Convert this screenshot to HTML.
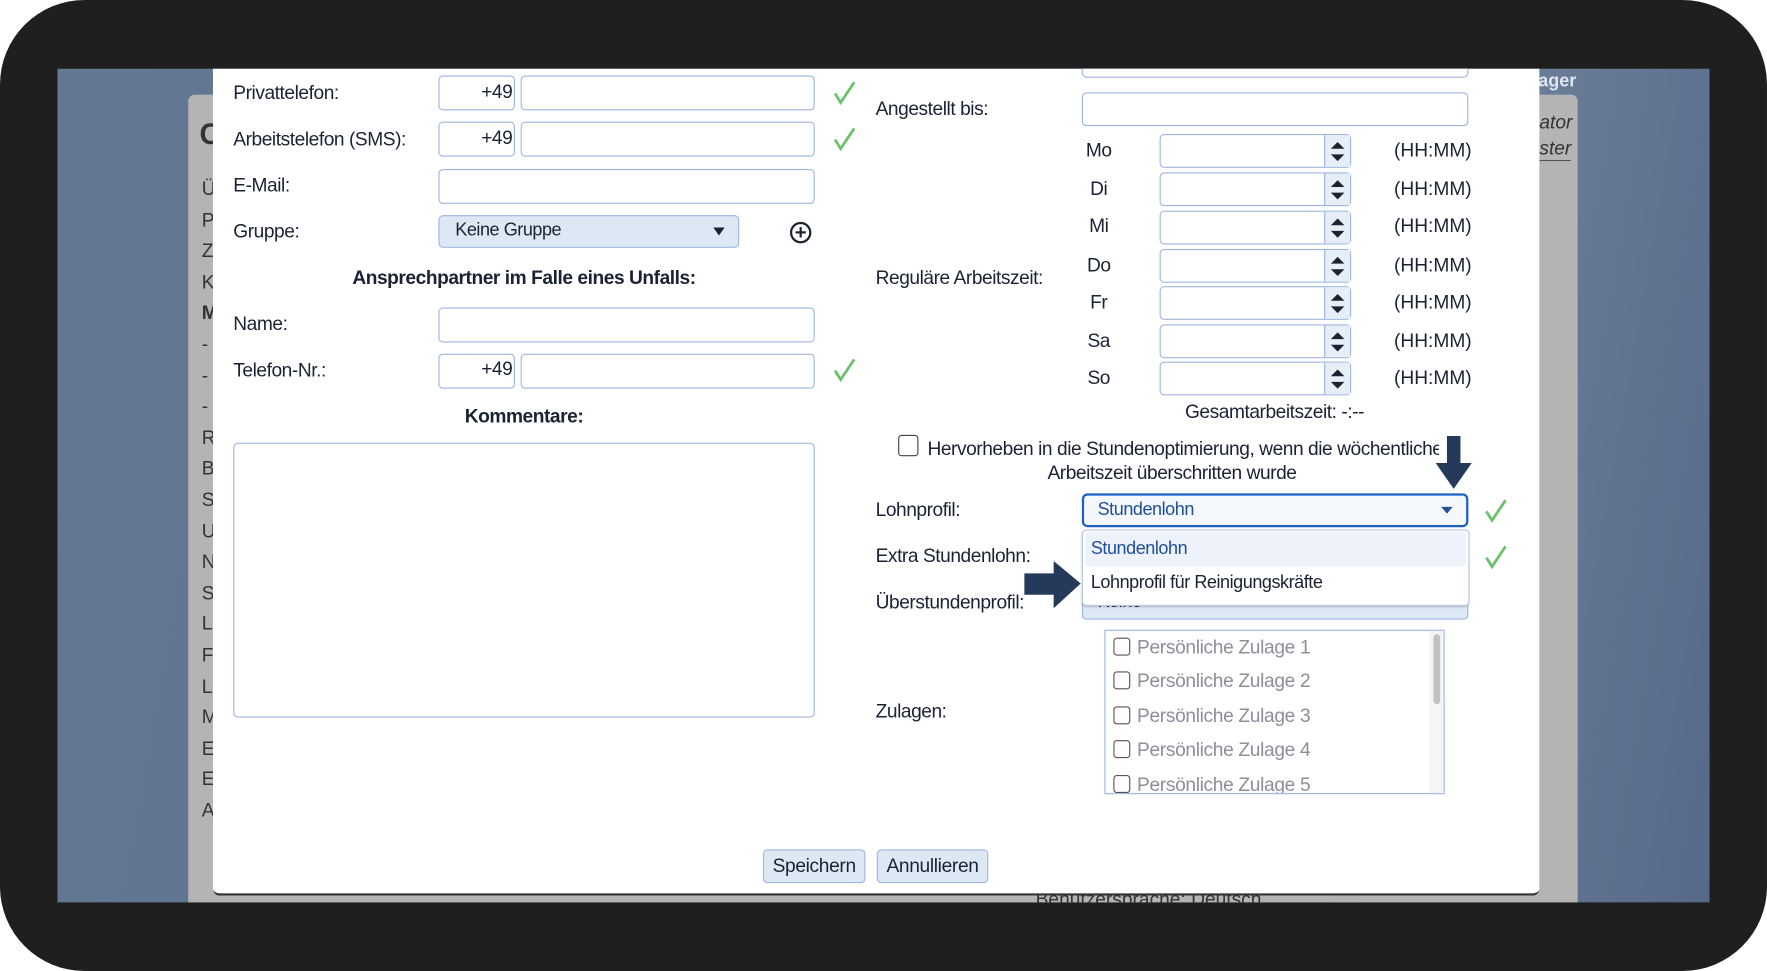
<!DOCTYPE html>
<html><head><meta charset="utf-8"><style>
*{margin:0;padding:0;box-sizing:border-box}
html,body{width:1767px;height:971px;overflow:hidden;background:#fff}
#s{position:absolute;left:0;top:0;width:1568px;height:862px;transform:scale(1.12691,1.1265);transform-origin:0 0;font-family:"Liberation Sans",sans-serif;color:#1a2233}
.a{position:absolute}
.t{position:absolute;font-size:17px;line-height:20px;white-space:nowrap;letter-spacing:-0.4px}
.in{position:absolute;border:1px solid #9db6e0;border-radius:4px;background:#fff}
.b{font-weight:bold}
.ck{position:absolute;width:22px;height:24px}
.sp{position:absolute;border:1px solid #9db6e0;border-radius:4px;background:#fff;width:170px;height:30px}
.sp::after{content:"";position:absolute;right:0;top:0;width:22px;height:28px;border-left:1px solid #9db6e0;background:#e6eef8}
.sp i{position:absolute;right:5px;width:0;height:0;border-left:6px solid transparent;border-right:6px solid transparent;z-index:2}
.hh{position:absolute;left:1237px;font-size:17px;line-height:20px}
.zl{position:absolute;left:988px;font-size:17px;line-height:20px;color:#8a8f98;letter-spacing:-0.3px}
.zl span{display:inline-block;width:15px;height:16px;border:1.5px solid #555;border-radius:3px;vertical-align:-2px;margin-right:6px}
.btn{position:absolute;height:30px;border:1px solid #9db6e0;border-radius:4px;background:#dde8f5;font-size:17px;line-height:28px;text-align:center;letter-spacing:-0.3px}
</style></head><body><div id="s">
<div class="a" style="left:0;top:0;width:1568px;height:862px;background:#201f20;border-radius:75px"></div>
<div class="a" style="left:51px;top:61px;width:1466px;height:740px;background:linear-gradient(100deg,#627893 0%,#5d7290 50%,#6c809a 80%,#56698a 100%);overflow:hidden">
 <div class="a" style="left:116px;top:23px;width:1233px;height:720px;background:#b4b4b4;border-radius:6px 6px 0 0"></div>
 <div class="a" style="left:126px;top:43px;font-size:26px;font-weight:bold;color:#333">C</div>
 <div class="a" style="left:128px;top:93px;font-size:17px;line-height:27.6px;color:#333;width:20px">Ü<br>P<br>Z<br>K<br><b>M</b><br>-<br>-<br>-<br>R<br>B<br>S<br>U<br>N<br>S<br>L<br>F<br>L<br>M<br>E<br>E<br>A</div>
 <div class="a" style="left:1314px;top:3px;font-size:16px;font-weight:bold;color:#dfe5ee">ager</div>
 <div class="a" style="left:1315px;top:38px;font-size:17px;font-style:italic;color:#333">ator</div>
 <div class="a" style="left:1315px;top:61px;font-size:17px;font-style:italic;color:#333;border-bottom:1px solid #555">ster</div>
 <div class="a" style="left:868px;top:728px;font-size:17px;color:#333">Benutzersprache: Deutsch</div>
</div>
<div class="a" style="left:189px;top:61px;width:1177px;height:734px;background:#fff;border-bottom:2px solid #333;border-radius:0 0 6px 6px;overflow:hidden">
</div>
<div class="t" style="left:207px;top:73px">Privattelefon:</div>
<div class="in" style="left:389px;top:67px;width:68px;height:31px"></div><div class="t" style="left:427px;top:72px">+49</div>
<div class="in" style="left:462px;top:67px;width:261px;height:31px"></div>
<div class="t" style="left:207px;top:114px">Arbeitstelefon (SMS):</div>
<div class="in" style="left:389px;top:108px;width:68px;height:31px"></div><div class="t" style="left:427px;top:113px">+49</div>
<div class="in" style="left:462px;top:108px;width:261px;height:31px"></div>
<div class="t" style="left:207px;top:155px">E-Mail:</div>
<div class="in" style="left:389px;top:150px;width:334px;height:31px"></div>
<div class="t" style="left:207px;top:196px">Gruppe:</div>
<div class="in" style="left:389px;top:191px;width:267px;height:29px;background:#dde8f5"></div>
<div class="t" style="left:404px;top:195px;font-size:16px">Keine Gruppe</div>
<div class="a" style="left:633px;top:202px;border-left:5px solid transparent;border-right:5px solid transparent;border-top:7px solid #1a2233"></div>
<div class="a" style="left:701px;top:197px;width:19px;height:19px;border:2px solid #1a2233;border-radius:50%;font-size:18px;line-height:14px;text-align:center;font-weight:bold">+</div>
<div class="t b" style="left:207px;width:516px;text-align:center;top:237px">Ansprechpartner im Falle eines Unfalls:</div>
<div class="t" style="left:207px;top:278px">Name:</div>
<div class="in" style="left:389px;top:273px;width:334px;height:31px"></div>
<div class="t" style="left:207px;top:319px">Telefon-Nr.:</div>
<div class="in" style="left:389px;top:314px;width:68px;height:31px"></div><div class="t" style="left:427px;top:318px">+49</div>
<div class="in" style="left:462px;top:314px;width:261px;height:31px"></div>
<div class="t b" style="left:207px;width:516px;text-align:center;top:360px">Kommentare:</div>
<div class="in" style="left:207px;top:393px;width:516px;height:244px"></div>
<svg class="ck" style="left:738px;top:70px" viewBox="0 0 22 24"><path d="M3 13 L8 21 L20 3" fill="none" stroke="#6cc26c" stroke-width="2.5"/></svg>
<svg class="ck" style="left:738px;top:111px" viewBox="0 0 22 24"><path d="M3 13 L8 21 L20 3" fill="none" stroke="#6cc26c" stroke-width="2.5"/></svg>
<svg class="ck" style="left:738px;top:316px" viewBox="0 0 22 24"><path d="M3 13 L8 21 L20 3" fill="none" stroke="#6cc26c" stroke-width="2.5"/></svg>
<div class="a" style="left:189px;top:61px;width:1177px;height:10px;overflow:hidden"><div class="in" style="left:771px;top:-10px;width:343px;height:18px"></div></div>
<div class="t" style="left:777px;top:87px">Angestellt bis:</div>
<div class="in" style="left:960px;top:82px;width:343px;height:30px"></div>
<div class="t" style="left:777px;top:237px">Reguläre Arbeitszeit:</div>

<div class="t" style="left:963px;width:24px;text-align:center;top:124px">Mo</div><div class="sp" style="left:1029px;top:119px"><i style="top:6px;border-bottom:6px solid #1a2233"></i><i style="top:17px;border-top:6px solid #1a2233"></i></div><div class="hh" style="top:124px">(HH:MM)</div>
<div class="t" style="left:963px;width:24px;text-align:center;top:158px">Di</div><div class="sp" style="left:1029px;top:153px"><i style="top:6px;border-bottom:6px solid #1a2233"></i><i style="top:17px;border-top:6px solid #1a2233"></i></div><div class="hh" style="top:158px">(HH:MM)</div>
<div class="t" style="left:963px;width:24px;text-align:center;top:191px">Mi</div><div class="sp" style="left:1029px;top:187px"><i style="top:6px;border-bottom:6px solid #1a2233"></i><i style="top:17px;border-top:6px solid #1a2233"></i></div><div class="hh" style="top:191px">(HH:MM)</div>
<div class="t" style="left:963px;width:24px;text-align:center;top:226px">Do</div><div class="sp" style="left:1029px;top:221px"><i style="top:6px;border-bottom:6px solid #1a2233"></i><i style="top:17px;border-top:6px solid #1a2233"></i></div><div class="hh" style="top:226px">(HH:MM)</div>
<div class="t" style="left:963px;width:24px;text-align:center;top:259px">Fr</div><div class="sp" style="left:1029px;top:254px"><i style="top:6px;border-bottom:6px solid #1a2233"></i><i style="top:17px;border-top:6px solid #1a2233"></i></div><div class="hh" style="top:259px">(HH:MM)</div>
<div class="t" style="left:963px;width:24px;text-align:center;top:293px">Sa</div><div class="sp" style="left:1029px;top:288px"><i style="top:6px;border-bottom:6px solid #1a2233"></i><i style="top:17px;border-top:6px solid #1a2233"></i></div><div class="hh" style="top:293px">(HH:MM)</div>
<div class="t" style="left:963px;width:24px;text-align:center;top:326px">So</div><div class="sp" style="left:1029px;top:321px"><i style="top:6px;border-bottom:6px solid #1a2233"></i><i style="top:17px;border-top:6px solid #1a2233"></i></div><div class="hh" style="top:326px">(HH:MM)</div>
<div class="t" style="left:1031px;width:200px;text-align:center;top:356px">Gesamtarbeitszeit: -:--</div>
<div class="a" style="left:797px;top:386px;width:18px;height:19px;border:1.5px solid #444;border-radius:3px"></div>
<div class="a" style="left:823px;top:389px;width:454px;overflow:hidden;font-size:17px;line-height:20px;white-space:nowrap;letter-spacing:-0.4px">Hervorheben in die Stundenoptimierung, wenn die wöchentliche</div>
<div class="t" style="left:890px;width:300px;text-align:center;top:410px">Arbeitszeit überschritten wurde</div>
<svg class="a" style="left:1262px;top:386px" width="46" height="50"><path d="M22 1 H34 V25 H44 L28 48 L12 25 H22 Z" fill="#253a5a"/></svg>
<div class="t" style="left:777px;top:443px">Lohnprofil:</div>
<div class="t" style="left:777px;top:484px">Extra Stundenlohn:</div>
<div class="t" style="left:777px;top:525px">Überstundenprofil:</div>
<div class="in" style="left:960px;top:520px;width:343px;height:30px;background:#dde8f5;overflow:hidden"><div class="t" style="left:13px;top:4px;font-size:16px">Keine</div></div>
<div class="a" style="left:960px;top:438px;width:343px;height:30px;border:2.5px solid #1e5fc4;border-radius:5px;background:#f4f7fc"></div>
<div class="t" style="left:974px;top:443px;color:#1f4e9a;font-size:16px">Stundenlohn</div>
<div class="a" style="left:1279px;top:450px;border-left:5px solid transparent;border-right:5px solid transparent;border-top:6px solid #1f4e9a"></div>
<div class="a" style="left:960px;top:470px;width:344px;height:68px;border:1px solid #b8c8e0;border-radius:4px;background:#fff;box-shadow:0 1px 2px rgba(0,0,0,.15)"></div>
<div class="a" style="left:963px;top:472px;width:338px;height:31px;background:#eef2fa;border-radius:3px"></div>
<div class="t" style="left:968px;top:478px;color:#1f4e9a;font-size:16px">Stundenlohn</div>
<div class="t" style="left:968px;top:508px;font-size:16px">Lohnprofil für Reinigungskräfte</div>
<svg class="a" style="left:907px;top:496px" width="54" height="46"><path d="M2 13 H28 V2 L52 22 L28 44 V32 H2 Z" fill="#253a5a"/></svg>
<svg class="ck" style="left:1316px;top:441px" viewBox="0 0 22 24"><path d="M3 13 L8 21 L20 3" fill="none" stroke="#6cc26c" stroke-width="2.5"/></svg>
<svg class="ck" style="left:1316px;top:482px" viewBox="0 0 22 24"><path d="M3 13 L8 21 L20 3" fill="none" stroke="#6cc26c" stroke-width="2.5"/></svg>
<div class="t" style="left:777px;top:622px">Zulagen:</div>
<div class="a" style="left:980px;top:559px;width:302px;height:146px;border:1px solid #9db6e0;overflow:hidden">
 <div class="a" style="left:287px;top:0;width:14px;height:146px;background:#f5f5f5"></div>
 <div class="a" style="left:291px;top:3px;width:6px;height:62px;background:#c1c1c1;border-radius:3px"></div>
</div>
<div class="a" style="left:980px;top:559px;width:290px;height:145px;overflow:hidden">
 <div class="zl" style="left:8px;top:6px"><span></span>Persönliche Zulage 1</div>
 <div class="zl" style="left:8px;top:36px"><span></span>Persönliche Zulage 2</div>
 <div class="zl" style="left:8px;top:67px"><span></span>Persönliche Zulage 3</div>
 <div class="zl" style="left:8px;top:97px"><span></span>Persönliche Zulage 4</div>
 <div class="zl" style="left:8px;top:128px"><span></span>Persönliche Zulage 5</div>
</div>
<div class="btn" style="left:677px;top:754px;width:91px">Speichern</div>
<div class="btn" style="left:778px;top:754px;width:99px">Annullieren</div>
</div></body></html>
